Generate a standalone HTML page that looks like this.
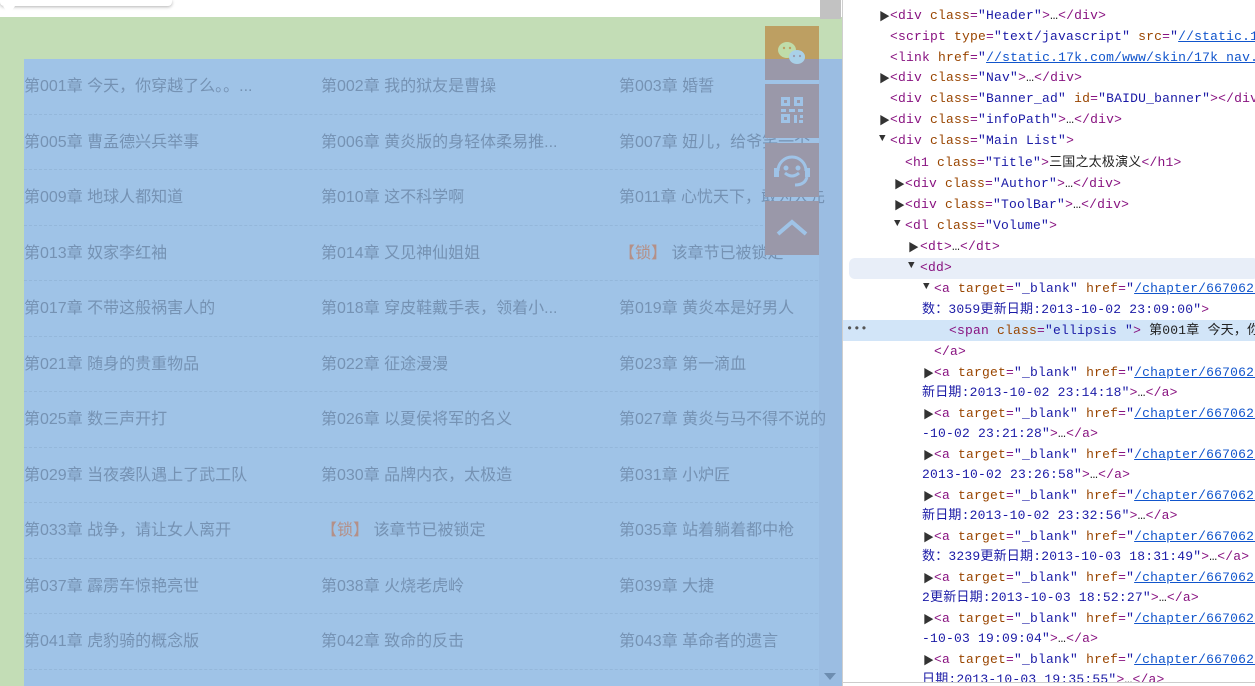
<!DOCTYPE html>
<html><head><meta charset="utf-8"><style>
*{margin:0;padding:0;box-sizing:border-box}
body{width:1255px;height:686px;overflow:hidden;background:#fff;position:relative;font-family:"Liberation Sans","Noto Sans CJK SC",sans-serif}
#left{position:absolute;left:0;top:0;width:842px;height:686px;background:#fff;overflow:hidden}
#green{position:absolute;left:0;top:17px;width:842px;height:669px;background:#c3ddb6}
#blue{position:absolute;left:24px;top:59px;width:818px;height:627px;background:#9fc3e7}
#sb{position:absolute;left:819px;top:59px;width:23px;height:627px;background:#9bbde2}
#thumb{position:absolute;left:820px;top:0;width:21px;height:19px;background:#c2c2c2}
.row{position:absolute;left:24px;width:794px;height:55.5px;border-bottom:1px dashed #94b7da}
.c{position:absolute;top:18px;font-size:16px;color:#7592b3;white-space:nowrap;line-height:20px}
.lk{color:#b49088}
.btn{position:absolute;left:765px;width:54px;height:54px;background:#9a98a9}
#tip{position:absolute;left:0;top:0;width:172px;height:6px;background:#fff;box-shadow:0 1px 3px rgba(0,0,0,.3);border-radius:0 0 4px 4px}
#dev{position:absolute;left:842px;top:0;width:413px;height:686px;background:#fff;border-left:1px solid #cfcfcf;font-family:"Liberation Mono","Noto Sans CJK SC",monospace;font-size:13px;overflow:hidden}
.l{position:absolute;white-space:nowrap;line-height:20px;color:#881280;letter-spacing:0.2px}
.a{color:#994500}.v{color:#1a1aa6}.u{text-decoration:underline;color:#1155cc}.t{color:#222}
.tri{position:absolute;font-size:11px;color:#333}
</style></head><body>
<div id="left">
<div id="green"></div>
<div id="blue"></div>
<div id="sb"></div>
<div id="thumb"></div>
<div id="tip"></div>
<div style="position:absolute;left:3px;top:6px;width:0;height:0;border-left:6px solid transparent;border-right:6px solid transparent;border-top:9px solid #fff"></div>
<div class="row" style="top:59px"><span class="c" style="left:0">第001章 今天，你穿越了么。。...</span><span class="c" style="left:297px">第002章 我的狱友是曹操</span><span class="c" style="left:595px">第003章 婚誓</span></div>
<div class="row" style="top:114.5px"><span class="c" style="left:0">第005章 曹孟德兴兵举事</span><span class="c" style="left:297px">第006章 黄炎版的身轻体柔易推...</span><span class="c" style="left:595px">第007章 妞儿，给爷笑一个</span></div>
<div class="row" style="top:170px"><span class="c" style="left:0">第009章 地球人都知道</span><span class="c" style="left:297px">第010章 这不科学啊</span><span class="c" style="left:595px">第011章 心忧天下，敢为人先</span></div>
<div class="row" style="top:225.5px"><span class="c" style="left:0">第013章 奴家李红袖</span><span class="c" style="left:297px">第014章 又见神仙姐姐</span><span class="c" style="left:595px"><span class="lk">【锁】</span> 该章节已被锁定</span></div>
<div class="row" style="top:281px"><span class="c" style="left:0">第017章 不带这般祸害人的</span><span class="c" style="left:297px">第018章 穿皮鞋戴手表，领着小...</span><span class="c" style="left:595px">第019章 黄炎本是好男人</span></div>
<div class="row" style="top:336.5px"><span class="c" style="left:0">第021章 随身的贵重物品</span><span class="c" style="left:297px">第022章 征途漫漫</span><span class="c" style="left:595px">第023章 第一滴血</span></div>
<div class="row" style="top:392px"><span class="c" style="left:0">第025章 数三声开打</span><span class="c" style="left:297px">第026章 以夏侯将军的名义</span><span class="c" style="left:595px">第027章 黄炎与马不得不说的</span></div>
<div class="row" style="top:447.5px"><span class="c" style="left:0">第029章 当夜袭队遇上了武工队</span><span class="c" style="left:297px">第030章 品牌内衣，太极造</span><span class="c" style="left:595px">第031章 小炉匠</span></div>
<div class="row" style="top:503px"><span class="c" style="left:0">第033章 战争，请让女人离开</span><span class="c" style="left:297px"><span class="lk">【锁】</span> 该章节已被锁定</span><span class="c" style="left:595px">第035章 站着躺着都中枪</span></div>
<div class="row" style="top:558.5px"><span class="c" style="left:0">第037章 霹雳车惊艳亮世</span><span class="c" style="left:297px">第038章 火烧老虎岭</span><span class="c" style="left:595px">第039章 大捷</span></div>
<div class="row" style="top:614px"><span class="c" style="left:0">第041章 虎豹骑的概念版</span><span class="c" style="left:297px">第042章 致命的反击</span><span class="c" style="left:595px">第043章 革命者的遗言</span></div>
<div class="btn" style="top:26px;background:linear-gradient(#bd9f62 0,#bd9f62 33px,#9a98a9 33px)">
<svg width="54" height="54"><ellipse cx="22" cy="24" rx="9" ry="8" fill="#bfdca9"/><ellipse cx="32" cy="31" rx="8" ry="7" fill="#a9d0e8"/><circle cx="19" cy="22" r="1.2" fill="#bd9f62"/><circle cx="25" cy="22" r="1.2" fill="#bd9f62"/><circle cx="29" cy="30" r="1.1" fill="#9a98a9"/><circle cx="35" cy="30" r="1.1" fill="#9a98a9"/></svg></div>
<div class="btn" style="top:84px"><svg width="54" height="54" fill="#9fc3e7"><rect x="16" y="13" width="9" height="9"/><rect x="29" y="13" width="9" height="9"/><rect x="16" y="30" width="9" height="9"/><rect x="19" y="16" width="3" height="3" fill="#9a98a9"/><rect x="32" y="16" width="3" height="3" fill="#9a98a9"/><rect x="19" y="33" width="3" height="3" fill="#9a98a9"/><rect x="16" y="25" width="5" height="3"/><rect x="24" y="25" width="6" height="3"/><rect x="33" y="25" width="5" height="3"/><rect x="29" y="31" width="3" height="8"/><rect x="35" y="31" width="3" height="3"/><rect x="34" y="36" width="4" height="3"/></svg></div>
<div class="btn" style="top:143px"><svg width="54" height="54" fill="none" stroke="#9fc3e7" stroke-width="3"><path d="M13 28 A14 14 0 0 1 41 28"/><rect x="9" y="25" width="5" height="9" fill="#9fc3e7" stroke="none"/><rect x="40" y="25" width="5" height="9" fill="#9fc3e7" stroke="none"/><path d="M42 34 Q40 42 30 42"/><path d="M20 30 Q27 36 34 30"/><circle cx="21" cy="25" r="1" fill="#9fc3e7"/><circle cx="33" cy="25" r="1" fill="#9fc3e7"/></svg></div>
<div class="btn" style="top:201px"><svg width="54" height="54"><path d="M13 33 L27 21 L41 33" fill="none" stroke="#9fc3e7" stroke-width="4"/></svg></div>
<div style="position:absolute;left:824px;top:673px;width:0;height:0;border-left:6px solid transparent;border-right:6px solid transparent;border-top:7px solid #6d8db0"></div>
</div>
<div id="dev">
<div style="position:absolute;left:6px;top:258px;width:410px;height:21px;background:#e8eef8;border-radius:6px"></div>
<div style="position:absolute;left:0;top:320px;width:413px;height:21px;background:#d2e5f8"></div>
<div style="position:absolute;left:3px;top:322px;color:#555;font-size:12px">•••</div>
<div class="tri" style="left:36px;top:8px">▶</div><div class="l" style="left:47px;top:6px">&lt;div <span class="a">class</span>=<span class="v">"Header"</span>&gt;<span class="t">…</span>&lt;/div&gt;</div>
<div class="l" style="left:47px;top:27px">&lt;script <span class="a">type</span>=<span class="v">"text/javascript"</span> <span class="a">src</span>=<span class="v">"<span class="u">//static.17k</span></span></div>
<div class="l" style="left:47px;top:48px">&lt;link <span class="a">href</span>=<span class="v">"<span class="u">//static.17k.com/www/skin/17k_nav.css</span></span></div>
<div class="tri" style="left:36px;top:70px">▶</div><div class="l" style="left:47px;top:68px">&lt;div <span class="a">class</span>=<span class="v">"Nav"</span>&gt;<span class="t">…</span>&lt;/div&gt;</div>
<div class="l" style="left:47px;top:89px">&lt;div <span class="a">class</span>=<span class="v">"Banner_ad"</span> <span class="a">id</span>=<span class="v">"BAIDU_banner"</span>&gt;&lt;/div&gt;</div>
<div class="tri" style="left:36px;top:112px">▶</div><div class="l" style="left:47px;top:110px">&lt;div <span class="a">class</span>=<span class="v">"infoPath"</span>&gt;<span class="t">…</span>&lt;/div&gt;</div>
<div class="tri" style="left:36px;top:133px">▼</div><div class="l" style="left:47px;top:131px">&lt;div <span class="a">class</span>=<span class="v">"Main List"</span>&gt;</div>
<div class="l" style="left:62px;top:153px">&lt;h1 <span class="a">class</span>=<span class="v">"Title"</span>&gt;<span class="t">三国之太极演义</span>&lt;/h1&gt;</div>
<div class="tri" style="left:51px;top:176px">▶</div><div class="l" style="left:62px;top:174px">&lt;div <span class="a">class</span>=<span class="v">"Author"</span>&gt;<span class="t">…</span>&lt;/div&gt;</div>
<div class="tri" style="left:51px;top:197px">▶</div><div class="l" style="left:62px;top:195px">&lt;div <span class="a">class</span>=<span class="v">"ToolBar"</span>&gt;<span class="t">…</span>&lt;/div&gt;</div>
<div class="tri" style="left:51px;top:218px">▼</div><div class="l" style="left:62px;top:216px">&lt;dl <span class="a">class</span>=<span class="v">"Volume"</span>&gt;</div>
<div class="tri" style="left:65px;top:239px">▶</div><div class="l" style="left:77px;top:237px">&lt;dt&gt;<span class="t">…</span>&lt;/dt&gt;</div>
<div class="tri" style="left:65px;top:260px">▼</div><div class="l" style="left:77px;top:258px">&lt;dd&gt;</div>
<div class="tri" style="left:80px;top:281px">▼</div><div class="l" style="left:91px;top:279px">&lt;a <span class="a">target</span>=<span class="v">"_blank"</span> <span class="a">href</span>=<span class="v">"<span class="u">/chapter/667062/</span></span></div>
<div class="l v" style="left:79px;top:300px">数：3059更新日期:2013-10-02 23:09:00"<span style="color:#881280">&gt;</span></div>
<div class="l" style="left:106px;top:321px">&lt;span <span class="a">class</span>=<span class="v">"ellipsis "</span>&gt; <span class="t">第001章 今天，你</span></div>
<div class="l" style="left:91px;top:342px">&lt;/a&gt;</div>
<div class="tri" style="left:80px;top:365px">▶</div><div class="l" style="left:91px;top:363px">&lt;a <span class="a">target</span>=<span class="v">"_blank"</span> <span class="a">href</span>=<span class="v">"<span class="u">/chapter/667062/</span></span></div>
<div class="l v" style="left:79px;top:383px">新日期:2013-10-02 23:14:18"<span style="color:#881280">&gt;<span class="t">…</span>&lt;/a&gt;</span></div>
<div class="tri" style="left:80px;top:406px">▶</div><div class="l" style="left:91px;top:404px">&lt;a <span class="a">target</span>=<span class="v">"_blank"</span> <span class="a">href</span>=<span class="v">"<span class="u">/chapter/667062/</span></span></div>
<div class="l v" style="left:79px;top:424px">-10-02 23:21:28"<span style="color:#881280">&gt;<span class="t">…</span>&lt;/a&gt;</span></div>
<div class="tri" style="left:80px;top:447px">▶</div><div class="l" style="left:91px;top:445px">&lt;a <span class="a">target</span>=<span class="v">"_blank"</span> <span class="a">href</span>=<span class="v">"<span class="u">/chapter/667062/</span></span></div>
<div class="l v" style="left:79px;top:465px">2013-10-02 23:26:58"<span style="color:#881280">&gt;<span class="t">…</span>&lt;/a&gt;</span></div>
<div class="tri" style="left:80px;top:488px">▶</div><div class="l" style="left:91px;top:486px">&lt;a <span class="a">target</span>=<span class="v">"_blank"</span> <span class="a">href</span>=<span class="v">"<span class="u">/chapter/667062/</span></span></div>
<div class="l v" style="left:79px;top:506px">新日期:2013-10-02 23:32:56"<span style="color:#881280">&gt;<span class="t">…</span>&lt;/a&gt;</span></div>
<div class="tri" style="left:80px;top:529px">▶</div><div class="l" style="left:91px;top:527px">&lt;a <span class="a">target</span>=<span class="v">"_blank"</span> <span class="a">href</span>=<span class="v">"<span class="u">/chapter/667062/</span></span></div>
<div class="l v" style="left:79px;top:547px">数：3239更新日期:2013-10-03 18:31:49"<span style="color:#881280">&gt;<span class="t">…</span>&lt;/a&gt;</span></div>
<div class="tri" style="left:80px;top:570px">▶</div><div class="l" style="left:91px;top:568px">&lt;a <span class="a">target</span>=<span class="v">"_blank"</span> <span class="a">href</span>=<span class="v">"<span class="u">/chapter/667062/</span></span></div>
<div class="l v" style="left:79px;top:588px">2更新日期:2013-10-03 18:52:27"<span style="color:#881280">&gt;<span class="t">…</span>&lt;/a&gt;</span></div>
<div class="tri" style="left:80px;top:611px">▶</div><div class="l" style="left:91px;top:609px">&lt;a <span class="a">target</span>=<span class="v">"_blank"</span> <span class="a">href</span>=<span class="v">"<span class="u">/chapter/667062/</span></span></div>
<div class="l v" style="left:79px;top:629px">-10-03 19:09:04"<span style="color:#881280">&gt;<span class="t">…</span>&lt;/a&gt;</span></div>
<div class="tri" style="left:80px;top:652px">▶</div><div class="l" style="left:91px;top:650px">&lt;a <span class="a">target</span>=<span class="v">"_blank"</span> <span class="a">href</span>=<span class="v">"<span class="u">/chapter/667062/</span></span></div>
<div class="l v" style="left:79px;top:670px">日期:2013-10-03 19:35:55"<span style="color:#881280">&gt;<span class="t">…</span>&lt;/a&gt;</span></div>
<div style="position:absolute;left:0;top:682px;width:413px;height:4px;background:#fff;border-top:1px solid #ccc"></div>
</div>
</body></html>
